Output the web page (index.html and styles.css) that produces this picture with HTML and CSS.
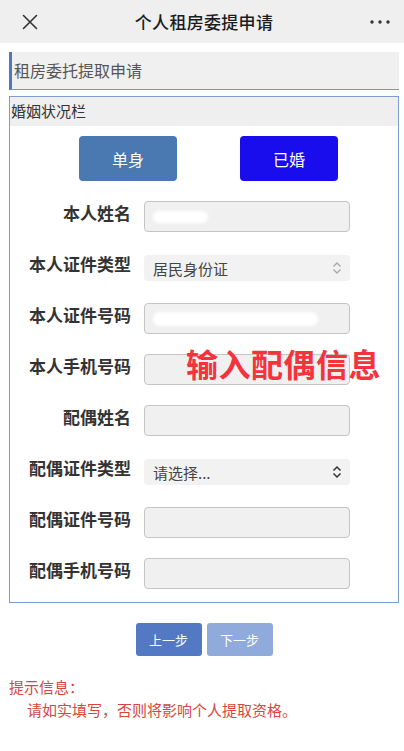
FILE: index.html
```html
<!DOCTYPE html>
<html lang="zh-CN">
<head>
<meta charset="utf-8">
<title>个人租房委提申请</title>
<link rel="stylesheet" href="styles.css">
</head>
<body>
<header class="topbar">
  <svg class="close" viewBox="0 0 16 16" width="16" height="16"><path d="M1.5 1.5L14.5 14.5M14.5 1.5L1.5 14.5" stroke="#333" stroke-width="1.6" fill="none" stroke-linecap="round"/></svg>
  <h1 class="title">个人租房委提申请</h1>
  <svg class="more" viewBox="0 0 20 4" width="20" height="4"><circle cx="2" cy="2" r="1.7" fill="#333"/><circle cx="10" cy="2" r="1.7" fill="#333"/><circle cx="18" cy="2" r="1.7" fill="#333"/></svg>
</header>

<main class="page">
  <div class="section-title">租房委托提取申请</div>

  <section class="panel">
    <div class="panel-head">婚姻状况栏</div>
    <div class="choice">
      <button class="choice-btn single">单身</button>
      <button class="choice-btn married">已婚</button>
    </div>

    <div class="form">
      <div class="row">
        <label class="label">本人姓名</label>
        <div class="field"><span class="smudge smudge-name"></span></div>
      </div>
      <div class="row">
        <label class="label">本人证件类型</label>
        <div class="select"><span>居民身份证</span><svg class="arrows light" viewBox="0 0 10 14" width="10" height="14"><path d="M1.5 5.5L5 2L8.5 5.5M1.5 8.5L5 12L8.5 8.5" stroke="#aaa" stroke-width="1.4" fill="none"/></svg></div>
      </div>
      <div class="row">
        <label class="label">本人证件号码</label>
        <div class="field"><span class="smudge smudge-id"></span></div>
      </div>
      <div class="row">
        <label class="label">本人手机号码</label>
        <div class="field"></div>
      </div>
      <div class="row">
        <label class="label">配偶姓名</label>
        <div class="field"></div>
      </div>
      <div class="row">
        <label class="label">配偶证件类型</label>
        <div class="select"><span>请选择...</span><svg class="arrows" viewBox="0 0 10 14" width="10" height="14"><path d="M1.5 5.5L5 2L8.5 5.5M1.5 8.5L5 12L8.5 8.5" stroke="#333" stroke-width="1.5" fill="none"/></svg></div>
      </div>
      <div class="row">
        <label class="label">配偶证件号码</label>
        <div class="field"></div>
      </div>
      <div class="row">
        <label class="label">配偶手机号码</label>
        <div class="field"></div>
      </div>
    </div>

    <div class="overlay-note">输入配偶信息</div>
  </section>

  <div class="steps">
    <button class="step prev">上一步</button>
    <button class="step next">下一步</button>
  </div>

  <div class="tips">
    <p class="tips-title">提示信息：</p>
    <p class="tips-text">请如实填写，否则将影响个人提取资格。</p>
  </div>
</main>
</body>
</html>
```

FILE: styles.css
```css
* { box-sizing: border-box; }

html, body {
  margin: 0;
  padding: 0;
}

body {
  width: 404px;
  min-height: 751px;
  background: #ffffff;
  font-family: "Noto Sans CJK SC", "Noto Sans", sans-serif;
  color: #333;
}

.topbar {
  height: 43px;
  background: #efefef;
  display: flex;
  align-items: center;
  justify-content: space-between;
  padding: 0 14px 0 22px;
}

.title {
  margin: 0;
  font-size: 17px;
  font-weight: 500;
  color: #1c1c1c;
  letter-spacing: 0.3px;
}

.page {
  padding: 9px 5px 0 9px;
}

.section-title {
  height: 38px;
  background: #f0f0f0;
  border-left: 3px solid #5476c2;
  border-bottom: 1px solid #7396d6;
  font-size: 16px;
  line-height: 37px;
  color: #555;
  padding-left: 2px;
}

.panel {
  position: relative;
  margin-top: 6px;
  border: 1px solid #7d9bd5;
  padding-bottom: 13px;
}

.panel-head {
  height: 29px;
  background: #efefef;
  font-size: 15px;
  line-height: 28px;
  color: #333;
  padding-left: 1px;
}

.choice {
  display: flex;
  justify-content: space-between;
  padding: 10px 60px 0 69px;
}

.choice-btn {
  width: 98px;
  height: 45px;
  border: none;
  border-radius: 4px;
  color: #fff;
  font-family: inherit;
  font-size: 16px;
  padding: 0;
}

.single { background: #4a79b2; }
.married { background: #190ded; }

.form {
  display: flex;
  flex-direction: column;
  gap: 20px;
  margin-top: 20px;
}

.row {
  display: grid;
  grid-template-columns: 121px 206px;
  column-gap: 13px;
  align-items: start;
  height: 31px;
}

.label {
  text-align: right;
  font-size: 17px;
  font-weight: 700;
  line-height: 22px;
  color: #333;
  padding-top: 1px;
}

.field {
  position: relative;
  height: 31px;
  background: #f0f0f0;
  border: 1px solid #c4c4c4;
  border-radius: 4px;
  overflow: hidden;
}

.smudge {
  position: absolute;
  background: #ffffff;
  border-radius: 8px;
  filter: blur(1.5px);
}

.smudge-name { left: 8px; top: 9px; width: 55px; height: 12px; }
.smudge-id { left: 8px; top: 8px; width: 165px; height: 14px; }

.select {
  margin-top: 3px;
  height: 26px;
  background: #f2f2f2;
  border-radius: 4px;
  display: flex;
  align-items: center;
  justify-content: space-between;
  padding: 0 8px 0 9px;
  font-size: 15px;
  color: #444;
}

.overlay-note {
  position: absolute;
  left: 176px;
  top: 246px;
  font-size: 32px;
  font-weight: 700;
  color: #f4333d;
  line-height: 40px;
  letter-spacing: 0.5px;
}

.steps {
  display: flex;
  justify-content: center;
  gap: 5px;
  margin-top: 20px;
}

.step {
  width: 66px;
  height: 33px;
  border: none;
  border-radius: 3px;
  color: #fff;
  font-family: inherit;
  font-size: 13px;
  padding: 0;
}

.prev { background: #5479c4; }
.next { background: #90aadc; }

.tips {
  margin-top: 19px;
  color: #d8473f;
  font-size: 15px;
  line-height: 23px;
}

.tips p { margin: 0; }
.tips-text { padding-left: 18px; }
```
